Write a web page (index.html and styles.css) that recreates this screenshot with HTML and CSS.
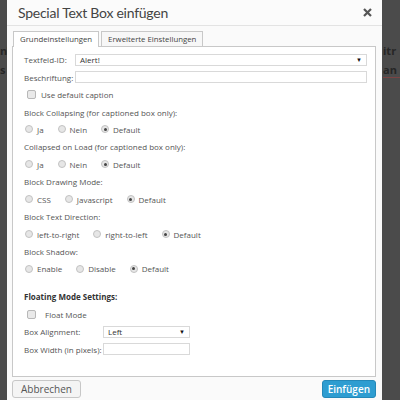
FILE: index.html
```html
<!DOCTYPE html>
<html lang="de">
  <head>
    <meta charset="UTF-8" />
    <meta name="viewport" content="width=device-width, initial-scale=1.0" />
    <title>Special Text Box einfügen</title>
    <link rel="stylesheet" href="styles.css">
  </head>
  <body>
    <!-- Seite hinter dem Dialog, nur die Ränder sind sichtbar -->
    <div class="page">
      <div class="page-line"><span class="edge-left">nl</span><span class="edge-right">itr</span></div>
      <div class="page-line"><span class="edge-left">s</span><span class="edge-right mark">an</span></div>
    </div>

    <div class="dialog">
      <header class="dialog-head">
        <h1>Special Text Box einfügen</h1>
        <svg class="close" width="9" height="9" viewBox="0 0 9 9">
          <path d="M1 1 L8 8 M8 1 L1 8" stroke="#555" stroke-width="2.2" />
        </svg>
      </header>

      <div class="dialog-body">
        <ul class="tabs">
          <li class="active">Grundeinstellungen</li>
          <li>Erweiterte Einstellungen</li>
        </ul>

        <section class="panel">
          <div class="row field">
            <label>Textfeld-ID:</label>
            <div class="select">Alert!<span class="arrow">▼</span></div>
          </div>
          <div class="row field">
            <label>Beschriftung:</label>
            <div class="input"></div>
          </div>
          <div class="row">
            <span class="check"></span><span class="check-label">Use default caption</span>
          </div>

          <div class="row">Block Collapsing (for captioned box only):</div>
          <div class="row radios">
            <span class="radio"></span>Ja
            <span class="radio"></span>Nein
            <span class="radio on"></span>Default
          </div>

          <div class="row">Collapsed on Load (for captioned box only):</div>
          <div class="row radios">
            <span class="radio"></span>Ja
            <span class="radio"></span>Nein
            <span class="radio on"></span>Default
          </div>

          <div class="row">Block Drawing Mode:</div>
          <div class="row radios">
            <span class="radio"></span>CSS
            <span class="radio"></span>Javascript
            <span class="radio on"></span>Default
          </div>

          <div class="row">Block Text Direction:</div>
          <div class="row radios">
            <span class="radio"></span>left-to-right
            <span class="radio"></span>right-to-left
            <span class="radio on"></span>Default
          </div>

          <div class="row">Block Shadow:</div>
          <div class="row radios">
            <span class="radio"></span>Enable
            <span class="radio"></span>Disable
            <span class="radio on"></span>Default
          </div>

          <div class="row title">Floating Mode Settings:</div>
          <div class="row">
            <span class="check"></span><span class="check-label float">Float Mode</span>
          </div>
          <div class="row field wide">
            <label>Box Alignment:</label>
            <div class="select small">Left<span class="arrow">▼</span></div>
          </div>
          <div class="row field wide">
            <label>Box Width (in pixels):</label>
            <div class="input small"></div>
          </div>
        </section>

        <footer class="dialog-foot">
          <button class="btn">Abbrechen</button>
          <button class="btn primary">Einfügen</button>
        </footer>
      </div>
    </div>
  </body>
</html>
```

FILE: styles.css
```css
* {
  box-sizing: border-box;
}
body {
  margin: 0;
  height: 400px;
  overflow: hidden;
  position: relative;
  background-color: #4b4b4b;
  font-family: "Open Sans", "Noto Sans", sans-serif;
}

/* La página de fondo, solo se ven los bordes */
.page {
  padding-top: 43px;
}
.page-line {
  display: flex;
  justify-content: space-between;
  height: 19px;
  font-size: 11px;
  font-weight: bold;
  color: #262626;
}
.edge-left {
  letter-spacing: -1px;
}
.edge-right {
  width: 17px;
  white-space: nowrap;
}
.mark {
  border-bottom: 1px solid #7a4444;
  height: 16px;
}

/* El diálogo va por encima de la página */
.dialog {
  position: absolute;
  left: 7px;
  top: 0;
  width: 375px;
  height: 410px;
  background-color: #fafafa;
}
.dialog-head {
  height: 26px;
  display: flex;
  align-items: center;
  justify-content: space-between;
  padding: 0 10px 0 11px;
  border-bottom: 1px solid #e3e3e3;
  background-color: #fbfbfb;
}
.dialog-head h1 {
  margin: 0;
  font-family: Lato, "Open Sans", sans-serif;
  font-size: 14px;
  letter-spacing: -0.25px;
  font-weight: normal;
  color: #444;
}
.dialog-body {
  padding: 5px 6px 0 5px;
}

.tabs {
  list-style: none;
  margin: 0 0 0 1px;
  padding: 0;
  display: flex;
  gap: 2px;
}
.tabs li {
  height: 15px;
  line-height: 14px;
  padding: 0 6px;
  font-size: 7.8px;
  color: #444;
  border: 1px solid #c8c8c8;
  border-bottom: none;
  background-color: #f7f7f7;
}
.tabs li.active {
  background-color: #fff;
  margin-bottom: -1px;
  height: 16px;
  position: relative;
}

.panel {
  height: 331px;
  border: 1px solid #c8c8c8;
  background-color: #fff;
  padding: 4px 8px 0 11px;
}
.row {
  display: flex;
  align-items: center;
  height: 17.45px;
  font-size: 8px;
  color: #555;
}
.field label {
  width: 51px;
  flex: none;
}
.field.wide label {
  width: 79px;
}
.select, .input {
  flex: 1;
  height: 12px;
  border: 1px solid #d9d9d9;
  display: flex;
  align-items: center;
  justify-content: space-between;
  padding: 0 4px;
  color: #333;
}
.select.small, .input.small {
  flex: none;
  width: 87px;
}
.arrow {
  font-size: 6px;
  color: #111;
}

.check {
  width: 9px;
  height: 9px;
  margin-left: 3px;
  border: 1px solid #b8b8b8;
  border-radius: 2px;
  background-color: #e9e9e9;
}
.check-label {
  margin-left: 5px;
}
.check-label.float {
  margin-left: 9px;
}

.radios .radio {
  width: 8px;
  height: 8px;
  margin: 0 4px 0 1px;
  border: 1px solid #c2c2c2;
  border-radius: 50%;
  background-color: #e6e6e6;
  display: flex;
  align-items: center;
  justify-content: center;
}
.radios .radio ~ .radio {
  margin-left: 14px;
}
.radio.on::after {
  content: "";
  width: 3px;
  height: 3px;
  border-radius: 50%;
  background-color: #444;
}

.title {
  margin-top: 10.5px;
  font-weight: bold;
  color: #333;
}

.dialog-foot {
  display: flex;
  justify-content: space-between;
  margin-top: 3px;
}
.btn {
  height: 18px;
  padding: 0 8px;
  font-family: inherit;
  font-size: 10px;
  border-radius: 3px;
  border: 1px solid #c7c7c7;
  background-color: #f4f4f4;
  color: #555;
}
.btn.primary {
  padding: 0 5px;
  border-color: #2488b8;
  background-color: #2e9dd1;
  color: #fff;
  font-weight: 600;
}
```
